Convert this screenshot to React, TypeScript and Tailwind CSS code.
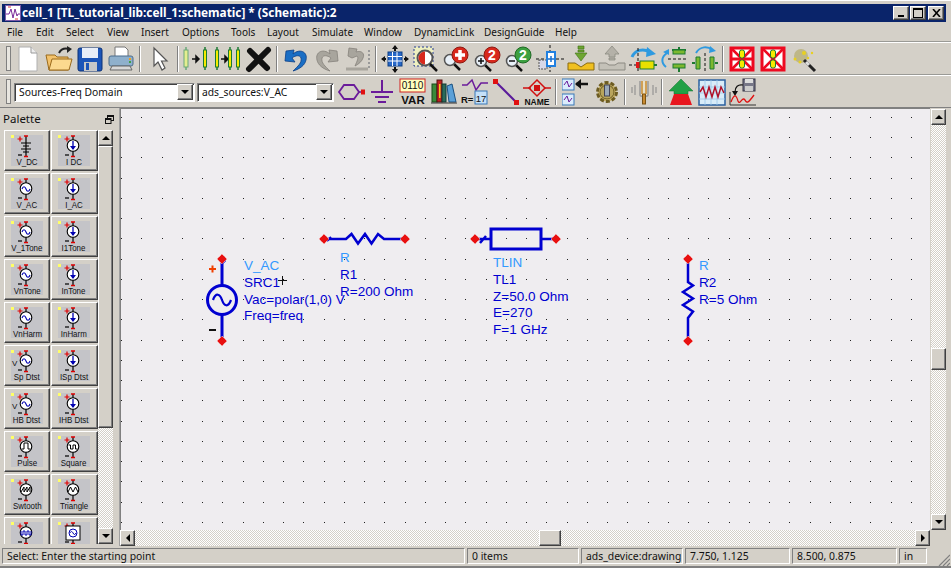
import React from "react";

const raised = "border border-t-white border-l-white border-r-[#404040] border-b-[#404040] bg-[#d4d0c8] shadow-[inset_-1px_-1px_0_#808080]";
const sunken = "border border-t-[#808080] border-l-[#808080] border-r-white border-b-white";
const dither = "bg-[repeating-conic-gradient(#d4d0c8_0_25%,#ffffff_0_50%)] bg-size-[2px_2px]";
const ui = "font-['Noto_Sans',sans-serif] text-[#111] leading-none whitespace-nowrap";

function Slot({ children }: { children: React.ReactNode }) {
  return <div className="w-[31px] h-[28px] shrink-0 flex items-center justify-center">{children}</div>;
}
function Ic({ children }: { children: React.ReactNode }) {
  return <svg width="28" height="28" viewBox="0 0 28 28" fill="none">{children}</svg>;
}
function Sep({ w }: { w: string }) {
  return (
    <div className={`${w} h-[26px] shrink-0 flex justify-center`}>
      <div className="w-[2px] h-full border-l border-l-[#808080] border-r border-r-white" />
    </div>
  );
}
function Grip() {
  return <div className="w-[5px] h-[25px] shrink-0 border border-[#808080] bg-[#e8e6e0]" />;
}
function Pill({ x, y1 = 2, y2 = 25, w = 4, pale }: { x: number; y1?: number; y2?: number; w?: number; pale?: boolean }) {
  return (
    <g>
      <line x1={x} x2={x} y1={y1} y2={y2} stroke={pale ? "#6aa878" : "#1d7a32"} strokeWidth="1.5" />
      <rect x={x - w / 2} y={y1 + 3} width={w} height={y2 - y1 - 6} fill={pale ? "#e4ee90" : "#f5ec00"} stroke={pale ? "#6aa878" : "#1d7a32"} />
    </g>
  );
}
function SmallArrow({ x, y }: { x: number; y: number }) {
  return <path d={`M${x} ${y}h5M${x + 4} ${y - 3}l3 3-3 3z`} stroke="#111" strokeWidth="1.5" fill="#111" />;
}
function Mag({ x, y, children }: { x: number; y: number; children?: React.ReactNode }) {
  return (
    <g>
      <line x1={x + 4} y1={y + 4} x2={x + 10} y2={y + 10} stroke="#111" strokeWidth="2.5" />
      <circle cx={x} cy={y} r="5.5" fill="#e8f0f8" stroke="#555" strokeWidth="1.5" />
      {children}
    </g>
  );
}
function RedX({ inner }: { inner: boolean }) {
  return (
    <Ic>
      <rect x="3" y="3" width="22" height="22" fill="#fff" stroke="#ee0a20" strokeWidth="3" />
      <path d="M3 3L25 25M25 3L3 25" stroke="#ee0a20" strokeWidth="2.5" />
      {inner && <path d="M3 14H25" stroke="#ee0a20" strokeWidth="3" />}
      <rect x="11.5" y="5" width="5" height="8" rx="2" fill="#f5ec00" stroke="#1d7a32" />
      <rect x="11.5" y="15" width="5" height="8" rx="2" fill="#f5ec00" stroke="#1d7a32" />
    </Ic>
  );
}

function Toolbar1() {
  return (
    <div className="h-[31px] shrink-0 flex items-center pl-[4px]">
      <Grip />
      <div className="w-[1px]" />
      <Slot><Ic><path d="M5 2H17L23 8V26H5Z" fill="#fff" stroke="#b0b0b0" /><path d="M17 2V8H23" stroke="#999" fill="#eee" /></Ic></Slot>
      <Slot><Ic><path d="M1 10H10L12 12H23V25H4Z" fill="#f3c26b" stroke="#9a6a1c" /><path d="M4 25L7 14H27L24 25Z" fill="#fbd98f" stroke="#9a6a1c" /><path d="M14 8C16 4 20 3 24 4" stroke="#222" strokeWidth="2" /><path d="M22 1L27 4L22 8Z" fill="#222" /></Ic></Slot>
      <Slot><Ic><rect x="2" y="3" width="24" height="23" rx="2" fill="#1c55b8" stroke="#0d3276" /><rect x="6" y="3" width="16" height="10" fill="#e8eef8" /><rect x="8" y="17" width="13" height="9" fill="#c8c8c8" /><rect x="10" y="18" width="3" height="7" fill="#1c55b8" /></Ic></Slot>
      <Slot><Ic><path d="M8 2H18L21 5V12H8Z" fill="#fff" stroke="#777" /><rect x="2" y="11" width="24" height="10" rx="2" fill="#8fb0cc" stroke="#4d6d8c" /><rect x="22" y="13" width="2" height="2" fill="#f0a020" /><rect x="22" y="16" width="2" height="2" fill="#40a040" /><path d="M5 21H23L25 25H3Z" fill="#d8d8d8" stroke="#666" /></Ic></Slot>
      <Sep w="w-[8px]" />
      <Slot><Ic><path d="M8 3V21L12 17L16 25L19 23L15.500 16H21Z" fill="#fff" stroke="#555" strokeWidth="1.200" /></Ic></Slot>
      <Sep w="w-[6px]" />
      <Slot><Ic><Pill x={3} pale /><SmallArrow x={9} y={14} /><Pill x={22} w={3} /></Ic></Slot>
      <Slot><Ic><Pill x={3} w={3} /><SmallArrow x={7} y={14} /><Pill x={16} w={3} /><Pill x={24} w={3} /></Ic></Slot>
      <Slot><Ic><path d="M4 24L23 5M5 6L22 23" stroke="#111" strokeWidth="6" strokeLinecap="round" /></Ic></Slot>
      <Sep w="w-[6px]" />
      <Slot><Ic><path d="M4 6L12 5L11 9C18 3 26 7 24 15C23 20 18 24 11 26C16 21 20 18 19 13C18 10 14 10 10 13L13 17L3 16Z" fill="#1a6ec4" stroke="#0c3f86" strokeWidth=".8" /></Ic></Slot>
      <Slot><Ic><path d="M24 6L16 5L17 9C10 3 2 7 4 15C5 20 10 24 17 26C12 21 8 18 9 13C10 10 14 10 18 13L15 17L25 16Z" fill="#a8a59d" stroke="#85827b" strokeWidth=".8" /></Ic></Slot>
      <Slot><Ic><path d="M25 5V23" stroke="#999" strokeDasharray="2 2" strokeWidth="2" /><path d="M2 24H24" stroke="#a8a59d" strokeWidth="3" /><path d="M5 3L13 4L12 7C18 5 21 9 19 13C18 16 15 19 11 21C13 16 15 13 13 11L8 13L4 11Z" fill="#a8a59d" stroke="#85827b" strokeWidth=".8" /></Ic></Slot>
      <Sep w="w-[6px]" />
      <Slot><Ic><path d="M14 1V6M14 22V27M5 14H1M27 14H23" stroke="#111" strokeWidth="2" /><path d="M11 4L14 0L17 4ZM11 24L14 28L17 24ZM4 11L0 14L4 17ZM24 11L28 14L24 17Z" fill="#111" /><rect x="7" y="7" width="14" height="14" fill="#2868c8" stroke="#0c3f86" /><path d="M7 11.500H21M7 16H21M11.500 7V21M16 7V21" stroke="#fff" /></Ic></Slot>
      <Slot><Ic><rect x="2" y="2" width="19" height="19" fill="#eef0c0" stroke="#223a90" strokeDasharray="2 2" /><circle cx="13" cy="13" r="7.500" fill="#fff" stroke="#555" strokeWidth="2" /><path d="M13 6.500A6.500 6.500 0 0 0 6.500 13H13Z M13 13H6.500A6.500 6.500 0 0 0 13 19.500Z" fill="#d8281c" /><path d="M18 19L25 26" stroke="#111" strokeWidth="2.500" /></Ic></Slot>
      <Slot><Ic><Mag x={7} y={15} /><circle cx="17" cy="10" r="8" fill="#d8281c" stroke="#8c1a12" /><path d="M12 10H22M17 5V15" stroke="#fff" strokeWidth="3.500" /></Ic></Slot>
      <Slot><Ic><Mag x={7} y={16}><path d="M4 16H10M7 13V19" stroke="#111" strokeWidth="1.500" /></Mag><circle cx="18" cy="10" r="8" fill="#d8281c" stroke="#8c1a12" /><text x="18" y="15" textAnchor="middle" fontFamily="Liberation Sans" fontWeight="700" fontSize="14" fill="#fff">2</text></Ic></Slot>
      <Slot><Ic><Mag x={7} y={16}><path d="M4 16H10" stroke="#111" strokeWidth="1.500" /></Mag><circle cx="18" cy="10" r="8" fill="#3ca040" stroke="#1f6a24" /><text x="18" y="15" textAnchor="middle" fontFamily="Liberation Sans" fontWeight="700" fontSize="14" fill="#fff">2</text></Ic></Slot>
      <Slot><Ic><path d="M14 0V27M0 14H28" stroke="#111" strokeDasharray="3 2" /><rect x="3" y="15" width="8" height="9" fill="#d8d8e8" stroke="#555" strokeDasharray="2 1" /><rect x="11" y="7" width="8" height="14" fill="#fff" stroke="#2080e0" strokeWidth="2" /><path d="M12 14H18M15 11V17" stroke="#1870d0" strokeWidth="1.500" /></Ic></Slot>
      <Slot><Ic><path d="M11 1H17V4H11ZM11 5H17V7H11ZM8 8H20L14 16L8 8Z" fill="#6ea632" stroke="#3e7016" strokeWidth=".6" /><path d="M1 18H8L14 22L20 18H27V25H1Z" fill="#f0c020" stroke="#8a6a10" /></Ic></Slot>
      <Slot><Ic><path d="M14 1L21 9H17V12H11V9H7ZM11 13H17V15H11Z" fill="#b4b1a8" stroke="#8c8a82" strokeWidth=".8" /><path d="M1 18H8L11 20H17L20 18H27V25H1Z" fill="#c4c1b8" stroke="#8c8a82" /></Ic></Slot>
      <Slot><Ic><path d="M3 12C6 5 14 3 21 7" stroke="#2f9ae0" strokeWidth="3" /><path d="M18 2L27 9L17 12Z" fill="#2f9ae0" /><path d="M9 3V27" stroke="#111" strokeDasharray="3 2" /><path d="M0 20H8" stroke="#111" strokeDasharray="3 2" /><rect x="7" y="17" width="4" height="6" fill="#e01818" /><rect x="11" y="16" width="14" height="8" fill="#e8e000" stroke="#1d7a32" /><path d="M25 20H28" stroke="#1d7a32" strokeWidth="2" /></Ic></Slot>
      <Slot><Ic><path d="M12 5H26M19 2V5" stroke="#1d7a32" strokeWidth="2" /><rect x="13" y="5" width="12" height="4" fill="#7cb82f" stroke="#1d7a32" /><path d="M8 14H28" stroke="#111" strokeDasharray="3 2" /><rect x="13" y="19" width="12" height="4" fill="#7cb82f" stroke="#1d7a32" /><path d="M19 23V27" stroke="#1d7a32" strokeWidth="2" /><path d="M7 8C1 12 1 18 6 22" stroke="#2f9ae0" strokeWidth="2" /><path d="M3 7L9 4V10Z" fill="#2f9ae0" /></Ic></Slot>
      <Slot><Ic><path d="M14 8V27" stroke="#111" strokeDasharray="3 2" /><path d="M1 18H4M24 18H27" stroke="#1d7a32" strokeWidth="2" /><path d="M5 12H9V24H5ZM19 12H23V24H19Z" fill="#7cb82f" stroke="#1d7a32" /><path d="M5 8C9 1 17 1 21 5" stroke="#2f9ae0" strokeWidth="2" /><path d="M19 1L25 6L18 8Z" fill="#2f9ae0" /></Ic></Slot>
      <Sep w="w-[6px]" />
      <Slot><RedX inner /></Slot>
      <Slot><RedX inner={false} /></Slot>
      <Slot><Ic><circle cx="11" cy="11" r="7" fill="#b8b078" opacity=".8" /><path d="M14 15L25 26" stroke="#222" strokeWidth="3" /><path d="M16 17L19 20" stroke="#ddd" strokeWidth="3" /><circle cx="5" cy="14" r="1.500" fill="#e8d020" /><circle cx="14" cy="8" r="2" fill="#e8d020" /><circle cx="22" cy="8" r="1.200" fill="#e8d020" /><circle cx="10" cy="17" r="1.500" fill="#e8d020" /><circle cx="18" cy="13" r="1.200" fill="#e8d020" /></Ic></Slot>
    </div>
  );
}

function Combo({ w, text }: { w: string; text: string }) {
  return (
    <div className={`${w} h-[19px] mt-[1px] shrink-0 flex items-center bg-white ${sunken} shadow-[inset_1px_1px_0_#404040]`}>
      <span className={`${ui} flex-1 pl-[4px] text-[10.3px]`}>{text}</span>
      <div className={`w-[16px] h-[16px] mr-[1px] flex items-center justify-center ${raised}`}>
        <svg width="8" height="4" viewBox="0 0 8 4"><path d="M0 0H8L4 4Z" fill="#000" /></svg>
      </div>
    </div>
  );
}

function Toolbar2() {
  return (
    <div className="h-[31px] shrink-0 flex items-center pl-[4px]">
      <Grip />
      <div className="w-[3px]" />
      <Combo w="w-[181px]" text="Sources-Freq Domain" />
      <div className="w-[2px]" />
      <Combo w="w-[137px]" text="ads_sources:V_AC" />
      <div className="w-[1px]" />
      <Slot><Ic><path d="M2 14L7 7H17L22 14L17 21H7Z" stroke="#6a1b9a" strokeWidth="1.800" /><path d="M22 14H25" stroke="#6a1b9a" strokeWidth="1.500" /><rect x="24" y="11.500" width="4" height="5" fill="#e01010" /></Ic></Slot>
      <Slot><Ic><path d="M14 2V14M3 14H25M7 19H21M10 24H18" stroke="#6a1b9a" strokeWidth="2" /></Ic></Slot>
      <Slot>
        <Ic>
          <rect x="1" y="1" width="25" height="13" fill="#ffffc0" stroke="#d02020" />
          <text x="13.500" y="11" textAnchor="middle" fontFamily="Liberation Sans" fontSize="10" fill="#111">0110</text>
          <text x="14" y="26" textAnchor="middle" fontFamily="Liberation Sans" fontWeight="700" fontSize="11.500" fill="#111">VAR</text>
        </Ic>
      </Slot>
      <Slot><Ic><rect x="2" y="6" width="5" height="18" fill="#3a8a3a" stroke="#174a17" /><rect x="7" y="2" width="5" height="22" fill="#c02020" stroke="#501010" /><rect x="9" y="6" width="1.500" height="14" fill="#f0d020" /><rect x="12" y="6" width="4" height="18" fill="#2a6a5a" stroke="#123a30" /><path d="M17 8L22 6L26 24H19Z" fill="#5aa0d8" stroke="#1a5080" /><path d="M1 25H27" stroke="#333" /></Ic></Slot>
      <Slot><Ic><path d="M1 7H6L11 2L15 12L20 5H27" stroke="#6a1b9a" strokeWidth="1.500" /><text x="0" y="25" fontFamily="Liberation Sans" fontWeight="700" fontSize="9.500" fill="#111">R=</text><rect x="14" y="13" width="12" height="13" fill="#c4e0f8" stroke="#3878b8" /><text x="20" y="24" textAnchor="middle" fontFamily="Liberation Sans" fontSize="9.500" fill="#111">17</text></Ic></Slot>
      <Slot><Ic><path d="M4 4L24 24" stroke="#5a1b9a" strokeWidth="2" /><rect x="1" y="1" width="5" height="5" fill="#e01010" /><rect x="22" y="22" width="5" height="5" fill="#e01010" /></Ic></Slot>
      <Slot><Ic><path d="M0 10H8M22 10H28" stroke="#d01010" strokeWidth="1.500" /><path d="M14 2L22 10L14 18L6 10Z" stroke="#d01010" strokeWidth="1.500" /><rect x="11" y="7" width="6" height="6" fill="#d01010" /><text x="14" y="27" textAnchor="middle" fontFamily="Liberation Sans" fontWeight="700" fontSize="8.500" fill="#111">NAME</text></Ic></Slot>
      <Sep w="w-[8px]" />
      <Slot><Ic><rect x="0" y="1" width="12" height="11" fill="#dcecfc" stroke="#3878b8" /><path d="M2 7L5 3L7 9L10 5" stroke="#6a1b9a" /><rect x="0" y="16" width="12" height="11" fill="#dcecfc" stroke="#3878b8" /><path d="M2 22L5 18L7 24L10 20" stroke="#6a1b9a" /><path d="M14 6H26" stroke="#111" strokeWidth="2.500" /><path d="M19 1L13 6L19 11Z" fill="#111" /></Ic></Slot>
      <Slot><Ic><circle cx="14" cy="14" r="9.500" fill="#c9b36a" stroke="#6d5c22" strokeWidth="3" strokeDasharray="4 2" /><circle cx="14" cy="14" r="7" fill="#b8a45c" stroke="#6d5c22" /><rect x="11.500" y="7" width="5" height="11" fill="#9aa8b8" stroke="#445" /></Ic></Slot>
      <Sep w="w-[6px]" />
      <Slot><Ic><path d="M10 3V17C10 19 18 19 18 17V3" stroke="#999" strokeWidth="1.500" /><path d="M11 3H17V17H11Z" fill="#e8e0c8" /><rect x="12.500" y="16" width="3" height="10" fill="#c88a30" stroke="#7a5212" /><path d="M12 3V16M16 3V16" stroke="#c88a30" strokeWidth="1.500" /><path d="M5 7V17M2 9V15M23 7V17M26 9V15" stroke="#888" /></Ic></Slot>
      <Sep w="w-[6px]" />
      <Slot><Ic><path d="M14 1L26 13H21V16H7V13H2Z" fill="#22a045" stroke="#147030" strokeWidth=".5" /><path d="M7 16H21L25 27H3Z" fill="#e8161e" /></Ic></Slot>
      <Slot><Ic><rect x="1" y="2" width="26" height="25" fill="#d8ecf8" stroke="#2a60a0" strokeWidth="1.500" /><path d="M1 9H27M1 15H27M1 21H27M7 2V27M13 2V27M19 2V27" stroke="#9cc8e8" strokeWidth=".8" /><path d="M2 14L5 9L8 19L11 9L14 19L17 9L20 19L23 9L26 15" stroke="#b01028" strokeWidth="1.500" /></Ic></Slot>
      <Slot><Ic><rect x="14" y="1" width="12" height="12" fill="#778" stroke="#334" /><rect x="16" y="1" width="8" height="4" fill="#ddd" /><rect x="16" y="8" width="8" height="5" fill="#ccc" /><path d="M14 7C9 6 6 9 6 14" stroke="#111" strokeWidth="1.200" /><path d="M3 13H9L6 18Z" fill="#111" /><path d="M1 14V27H27" stroke="#333" /><path d="M2 24C5 16 7 16 9 23C11 28 13 18 16 22C18 26 20 24 25 17" stroke="#e01010" strokeWidth="1.300" /></Ic></Slot>
    </div>
  );
}

type SymKind = "dc" | "ac" | "i" | "pulse" | "square" | "saw" | "tri" | "burst" | "box";
function Sym({ k, v }: { k: SymKind; v?: boolean }) {
  const inner: Record<string, React.ReactNode> = {
    ac: <path d="M11 11c1-3 3-3 4 0s3 3 4 0" stroke="#0000b0" strokeWidth="1.100" fill="none" />,
    i: <g><path d="M15 6V14" stroke="#0000b0" strokeWidth="1.300" /><path d="M12 11H18L15 15Z" fill="#0000b0" /></g>,
    pulse: <path d="M10.500 13H13V7H17V13H19.500" stroke="#000" fill="none" />,
    square: <path d="M10.500 9H12.500V13H15V9H17.500V13H19.500" stroke="#000" fill="none" />,
    saw: <path d="M10 13L13 8V13L16 8V13L19 8V13" stroke="#000" fill="none" />,
    tri: <path d="M10 13L12.500 8L15 13L17.500 8L20 13" stroke="#000" fill="none" />,
    burst: <path d="M10 9V13H12V9H14V13H16V9H18V13H20V9" stroke="#0000b0" fill="none" />,
  };
  return (
    <svg width="32" height="23" viewBox="0 0 32 23" fill="none" className="shrink-0">
      <path d="M15 1V21" stroke="#000" strokeWidth="1.200" />
      <path d="M13 1H17M13 21.500H17" stroke="#e00000" strokeWidth="1.500" />
      <path d="M6.500 4H11.500M9 1.500V6.500" stroke="#e00000" strokeWidth="1.200" />
      <path d="M7 20H11" stroke="#000" strokeWidth="1.200" />
      {k === "dc" ? (
        <path d="M10 8H20M12 11H18M10 14H20M12 17H18" stroke="#000" strokeWidth="1.100" />
      ) : k === "box" ? (
        <g>
          <rect x="8" y="4" width="14" height="14" fill="#fff" stroke="#000" />
          <circle cx="15" cy="11" r="4" stroke="#0000b0" />
          <path d="M12 11c1-2 2-2 3 0s2 2 3 0" stroke="#0000b0" />
        </g>
      ) : (
        <g>
          <circle cx="15" cy="10.500" r="5.800" fill="#fff" stroke="#000" strokeWidth="1.100" />
          {inner[k]}
        </g>
      )}
      {v && <text x="1" y="16" fontFamily="Liberation Sans" fontSize="8" fill="#111">V</text>}
    </svg>
  );
}

function PaletteBtn({ label, k, w, v }: { label: string; k: SymKind; w: string; v?: boolean }) {
  return (
    <div className={`${w} h-[41px] shrink-0 ${raised} relative pt-[4px] pl-[6px]`}>
      <div className="absolute left-[6px] top-[4px] w-[3px] h-[3px] bg-[#ffff66]" />
      <div className="w-[32px] h-[31px] bg-[#c4c4c8] flex flex-col items-center">
        <Sym k={k} v={v} />
        <span className="font-['Liberation_Sans',sans-serif] text-[9px] leading-[8px] scale-x-[.88] text-[#111] whitespace-nowrap">{label}</span>
      </div>
    </div>
  );
}

const paletteRows: [string, SymKind, string, SymKind, boolean?][] = [
  ["V_DC", "dc", "I DC", "i"],
  ["V_AC", "ac", "I_AC", "i"],
  ["V_1Tone", "ac", "I1Tone", "i"],
  ["VnTone", "ac", "InTone", "i"],
  ["VnHarm", "ac", "InHarm", "i"],
  ["Sp Dtst", "ac", "ISp Dtst", "i", true],
  ["HB Dtst", "ac", "IHB Dtst", "i", true],
  ["Pulse", "pulse", "Square", "square"],
  ["Swtooth", "saw", "Triangle", "tri"],
  ["", "burst", "", "box"],
];

function Palette() {
  return (
    <div className="w-[118px] shrink-0 flex flex-col border-r border-r-[#a0a0a0]">
      <div className="h-[22px] shrink-0 flex items-center justify-between pl-[1px] pr-[5px]">
        <span className="font-['Noto_Sans',sans-serif] text-[11.5px] leading-none text-[#111]">Palette</span>
        <svg width="9" height="9" viewBox="0 0 9 9" fill="none">
          <rect x="2.500" y=".5" width="6" height="5" stroke="#111" />
          <path d="M2.500 1.500H8.500" stroke="#111" />
          <rect x=".5" y="3.500" width="5.500" height="5" fill="#d4d0c8" stroke="#111" />
          <path d="M.5 4.500H6" stroke="#111" />
        </svg>
      </div>
      <div className="flex-1 min-h-0 flex pl-[2px] pb-[2px]">
        <div className="w-[94px] h-full overflow-hidden flex flex-col gap-[2px] pr-0 shrink-0">
          {paletteRows.map((r) => (
            <div key={r[0] + r[2]} className="flex gap-[1px] shrink-0">
              <PaletteBtn label={r[0]} k={r[1]} w="w-[46px]" v={r[4]} />
              <PaletteBtn label={r[2]} k={r[3]} w="w-[47px]" />
            </div>
          ))}
        </div>
        <div className="w-[15px] h-full flex flex-col">
          <ScrollBtn dir="up" />
          <div className={`h-[282px] shrink-0 ${raised}`} />
          <div className={`flex-1 ${dither}`} />
          <ScrollBtn dir="down" />
        </div>
      </div>
    </div>
  );
}

function ScrollBtn({ dir }: { dir: "up" | "down" | "left" | "right" }) {
  const d = { up: "M0 5H8L4 1Z", down: "M0 1H8L4 5Z", left: "M6 0V8L2 4Z", right: "M2 0V8L6 4Z" }[dir];
  const box = dir === "up" || dir === "down" ? "0 0 8 6" : "0 0 8 8";
  return (
    <div className={`w-[15px] h-[16px] shrink-0 flex items-center justify-center ${raised}`}>
      <svg width="8" height={dir === "up" || dir === "down" ? 6 : 8} viewBox={box}><path d={d} fill="#000" /></svg>
    </div>
  );
}

function Pin({ x, y }: { x: number; y: number }) {
  const p = `${x},${y - 5} ${x + 5},${y} ${x},${y + 5} ${x - 5},${y}`;
  return (
    <g>
      <polygon points={p} fill="#e81010" stroke="#f8c8c8" strokeWidth="1" strokeDasharray="1 1" />
    </g>
  );
}

const xs = Array.from({ length: 40 }, (_, i) => Math.round(121 + i * 20.25));
const ys = Array.from({ length: 21 }, (_, i) => Math.round(116.8 + i * 20.25));
const wire = "#0000d0";

function Schematic() {
  return (
    <svg className="absolute inset-0" width="809" height="422" viewBox="121 109 809 422" fill="none">
      {ys.map((y) => xs.map((x) => <rect key={x + "-" + y} x={x} y={y} width="1" height="1" fill="#222" />))}
      {/* V_AC */}
      <path d="M222 262V286M222 314V338M222 263L225 260" stroke={wire} strokeWidth="3" />
      <circle cx="222" cy="300" r="14.500" stroke={wire} strokeWidth="3" fill="none" />
      <path d="M213 300C216 292 220 294 222 300S228 308 231 300" stroke={wire} strokeWidth="2.200" />
      <path d="M209 269H216M212.500 265.500V272.500" stroke="#f04000" strokeWidth="2" />
      <path d="M209 330H216" stroke="#111" strokeWidth="2" />
      <Pin x={222} y={259} />
      <Pin x={222} y={341} />
      <path d="M278 280.500H287M282.500 276V285" stroke="#111" strokeWidth="1" />
      {/* R1 */}
      <path d="M327 239H346L351.500 234L358 243.500L365 234L371.500 243.500L378 234L384 239H405" stroke={wire} strokeWidth="2.500" />
      <path d="M327 241L331 237" stroke={wire} strokeWidth="2" />
      <Pin x={324} y={239} />
      <Pin x={405} y={239} />
      {/* TL */}
      <rect x="491" y="229" width="50" height="20" stroke={wire} strokeWidth="3" />
      <path d="M478 239H491M541 239H556M480 243L486 236" stroke={wire} strokeWidth="2.500" />
      <Pin x={475} y={239} />
      <Pin x={556} y={239} />
      {/* R2 */}
      <path d="M688 259V282L693 285.500L683 292L693 298.500L683 305L693 311.500L688 318V341" stroke={wire} strokeWidth="2.500" />
      <Pin x={688} y={259} />
      <Pin x={688} y={341} />
    </svg>
  );
}

function Label({ x, y, lines }: { x: string; y: string; lines: string[] }) {
  return (
    <div className={`absolute ${x} ${y} font-['Liberation_Sans',sans-serif] text-[13.5px] leading-[16.8px] whitespace-nowrap text-[#0000d0]`}>
      {lines.map((l, i) => (
        <div key={l} className={i === 0 ? "text-[#3399ff]" : ""}>{l}</div>
      ))}
    </div>
  );
}

function Canvas() {
  return (
    <div className="relative flex-1 min-h-0 overflow-hidden bg-[#efedf0] border-t border-l border-[#808080]">
      <Schematic />
      <Label x="left-[123px]" y="top-[149px]" lines={["V_AC", "SRC1", "Vac=polar(1,0) V", "Freq=freq"]} />
      <Label x="left-[219px]" y="top-[141px]" lines={["R", "R1", "R=200 Ohm"]} />
      <Label x="left-[372px]" y="top-[146px]" lines={["TLIN", "TL1", "Z=50.0 Ohm", "E=270", "F=1 GHz"]} />
      <Label x="left-[578px]" y="top-[149px]" lines={["R", "R2", "R=5 Ohm"]} />
    </div>
  );
}

function StatusField({ w, text, blue }: { w: string; text: string; blue?: boolean }) {
  return (
    <div className={`${w} h-[16px] shrink-0 flex items-center pl-[4px] ${sunken}`}>
      <span className={`${ui} text-[10.4px] ${blue ? "text-[#0000e0]" : ""}`}>{text}</span>
    </div>
  );
}

export default function App() {
  const menu: [string, string][] = [
    ["File", "w-[29px]"], ["Edit", "w-[30px]"], ["Select", "w-[41px]"], ["View", "w-[34px]"], ["Insert", "w-[41px]"],
    ["Options", "w-[49px]"], ["Tools", "w-[36px]"], ["Layout", "w-[45px]"], ["Simulate", "w-[52px]"], ["Window", "w-[50px]"],
    ["DynamicLink", "w-[70px]"], ["DesignGuide", "w-[71px]"], ["Help", "w-[30px]"],
  ];
  return (
    <div className="w-[951px] h-[568px] overflow-hidden bg-[#d4d0c8] flex flex-col pt-[3px] pl-[2px] pr-[5px] border-t border-t-white border-b-2 border-b-[#808080]">
      <div className="h-[18px] shrink-0 bg-[#0a246a] flex items-center pl-[3px] pr-[2px]">
        <svg width="16" height="16" viewBox="0 0 16 16" className="shrink-0">
          <rect x=".5" y=".5" width="15" height="15" fill="#fff" stroke="#7a5aa8" />
          <path d="M1 9H4L6 4L8 13L10 4L12 11L13 9H15" stroke="#7a2a98" fill="none" />
          <path d="M3 2H6M10 14H13" stroke="#e04040" />
        </svg>
        <span className="ml-[1px] font-['Noto_Sans',sans-serif] font-bold text-[11.8px] leading-none text-white whitespace-nowrap">
          cell_1 [TL_tutorial_lib:cell_1:schematic] * (Schematic):2
        </span>
        <div className="ml-auto flex items-center">
          <div className={`w-[16px] h-[14px] flex items-end justify-center pb-[2px] ${raised}`}><div className="w-[6px] h-[2px] bg-black" /></div>
          <div className={`w-[16px] h-[14px] ml-[1px] flex items-center justify-center ${raised}`}><div className="w-[10px] h-[10px] border border-t-2 border-black" /></div>
          <div className={`w-[16px] h-[14px] ml-[2px] flex items-center justify-center ${raised}`}>
            <svg width="9" height="8" viewBox="0 0 9 8"><path d="M1 0L8 8M8 0L1 8" stroke="#000" strokeWidth="1.600" /></svg>
          </div>
        </div>
      </div>
      <div className="h-[19px] shrink-0 flex items-center pl-[5px]">
        {menu.map(([t, w]) => (
          <span key={t} className={`${ui} text-[10px] ${w} shrink-0`}>{t}</span>
        ))}
      </div>
      <div className="h-[2px] shrink-0 bg-[#9a9a96] border-b border-b-white -mr-[5px] -ml-[2px]" />
      <Toolbar1 />
      <div className="h-[2px] shrink-0 bg-[#9a9a96] border-b border-b-white -mr-[5px] -ml-[2px]" />
      <Toolbar2 />
      <div className="h-[1px] shrink-0 bg-[#808080] -mr-[5px] -ml-[2px]" />
      <div className="flex-1 min-h-0 flex">
        <Palette />
        <div className="flex-1 min-w-0 flex flex-col">
          <div className="flex-1 min-h-0 flex">
            <Canvas />
            <div className="w-[16px] shrink-0 flex flex-col pt-[1px] pl-[1px]">
              <ScrollBtn dir="up" />
              <div className={`h-[223px] shrink-0 ${dither}`} />
              <div className={`w-[15px] h-[22px] shrink-0 ${raised}`} />
              <div className={`flex-1 ${dither}`} />
              <ScrollBtn dir="down" />
            </div>
          </div>
          <div className="h-[16px] shrink-0 flex pr-[16px]">
            <ScrollBtn dir="left" />
            <div className={`w-[404px] shrink-0 ${dither}`} />
            <div className={`w-[22px] shrink-0 ${raised}`} />
            <div className={`flex-1 ${dither}`} />
            <ScrollBtn dir="right" />
          </div>
        </div>
      </div>
      <div className="h-[20px] shrink-0 flex items-center gap-[2px]">
        <StatusField w="w-[463px]" text="Select: Enter the starting point" />
        <StatusField w="w-[112px]" text="0 items" />
        <StatusField w="w-[102px]" text="ads_device:drawing" blue />
        <StatusField w="w-[105px]" text="7.750, 1.125" />
        <StatusField w="w-[105px]" text="8.500, 0.875" />
        <StatusField w="w-[28px]" text="in" />
        <svg width="12" height="12" viewBox="0 0 12 12" className="ml-[9px] self-end shrink-0">
          <path d="M12 1L1 12M12 5L5 12M12 9L9 12" stroke="#808080" strokeWidth="1.200" />
        </svg>
      </div>
    </div>
  );
}
